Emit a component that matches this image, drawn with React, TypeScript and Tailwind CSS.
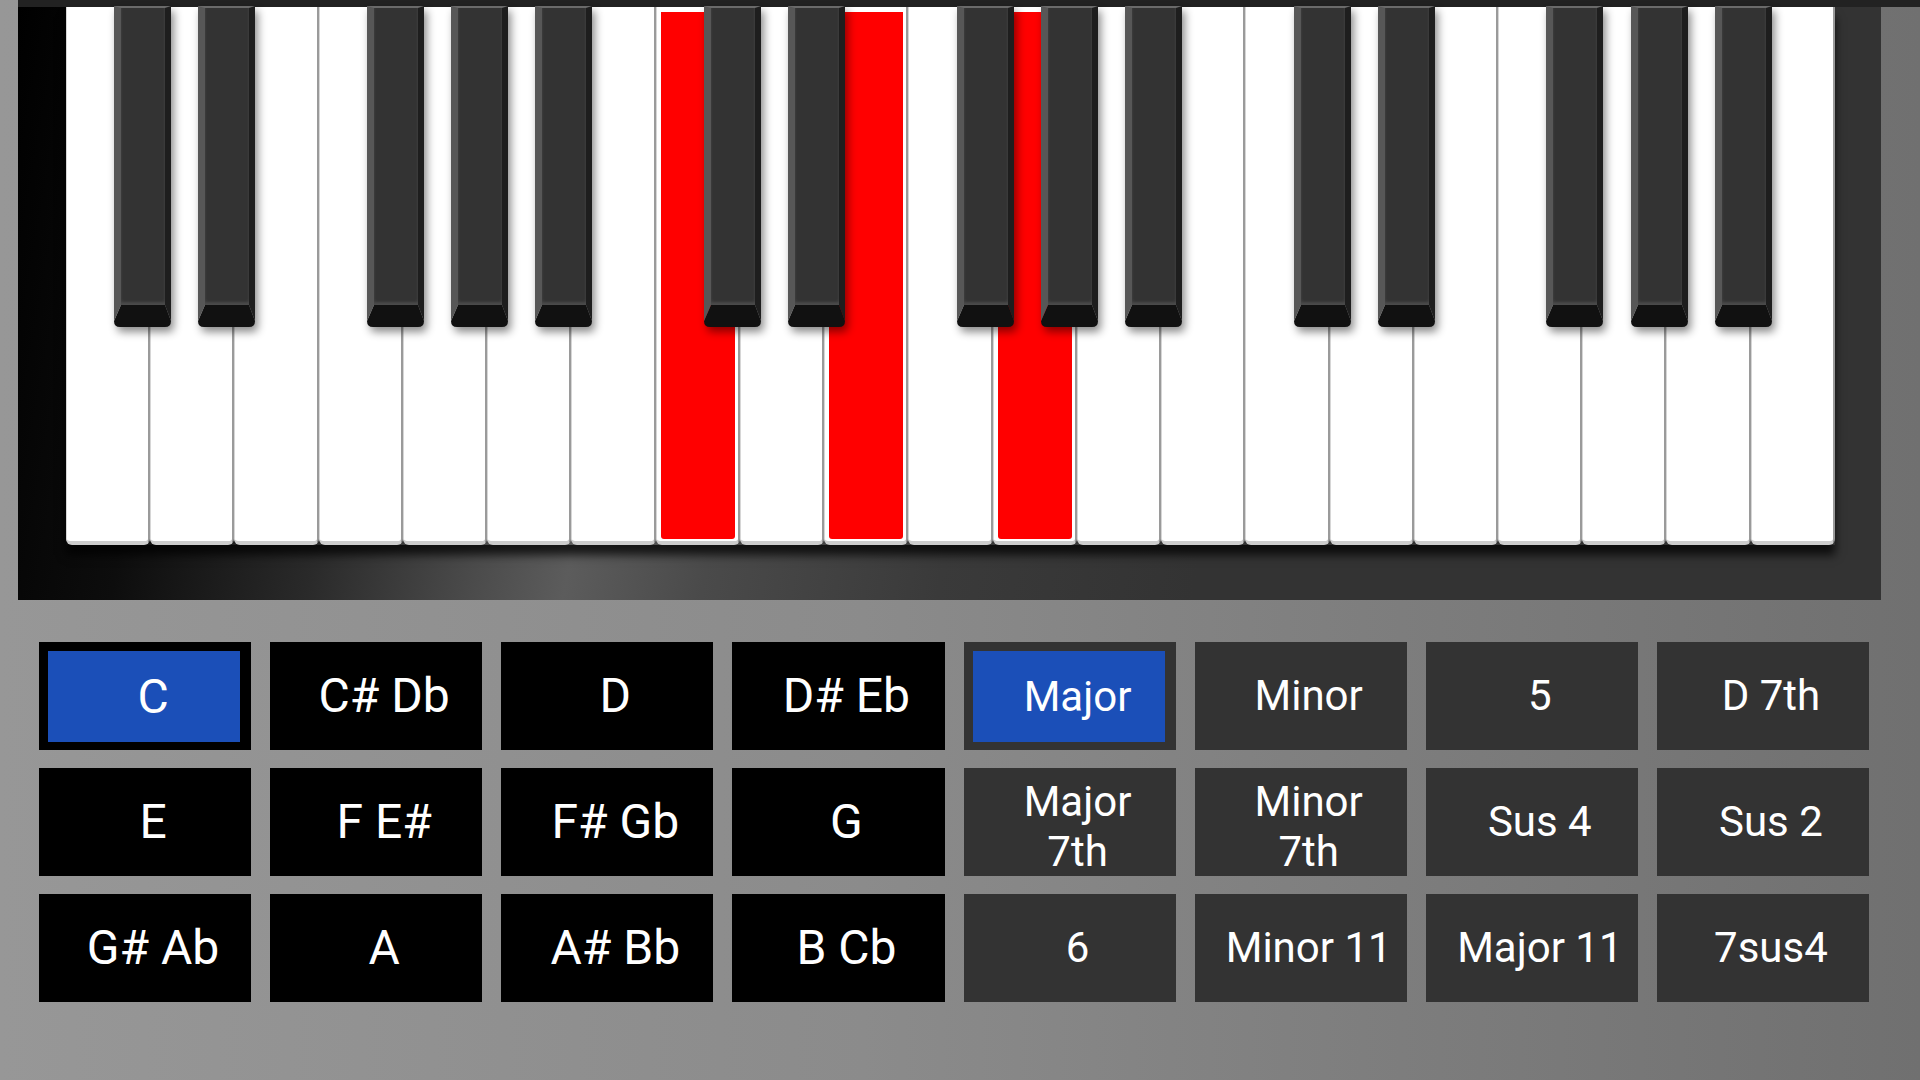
import React from 'react';

// one keyboard of 3 octaves: 21 white keys, black keys sit on the boundaries
const WHITE_COUNT = 21;
const KEYS_WIDTH = 1769;
const WHITE_W = KEYS_WIDTH / WHITE_COUNT;
const blackBoundaries = [0, 1, 2].flatMap((o) => [1, 2, 4, 5, 6].map((b) => o * 7 + b));
const pressed = [7, 9, 11]; // C E G

const noteRows = [
  ['C', 'C# Db', 'D', 'D# Eb'],
  ['E', 'F E#', 'F# Gb', 'G'],
  ['G# Ab', 'A', 'A# Bb', 'B Cb'],
];
const chordRows = [
  ['Major', 'Minor', '5', 'D 7th'],
  ['Major\n7th', 'Minor\n7th', 'Sus 4', 'Sus 2'],
  ['6', 'Minor 11', 'Major 11', '7sus4'],
];

function WhiteKey({ down }: { down: boolean }) {
  return (
    <div className="flex-1 h-full flex bg-white border-l border-l-[#d6d6d6] border-r-2 border-r-[#9a9a9a] border-b-4 border-b-[#cdcdcd] rounded-b-[6px] pt-[5px] pl-[4px] pr-[3px] pb-[2px]">
      {down && <div className="flex-1 bg-[#ff0000] rounded-b-[3px]" />}
    </div>
  );
}

function BlackKey({ left }: { left: number }) {
  return (
    <div
      className="absolute top-[-1px] w-[57px] h-[321px] flex flex-col drop-shadow-[3px_5px_4px_rgba(0,0,0,0.45)]"
      style={{ left }}
    >
      <div className="flex-1 bg-[#333333] border-t-2 border-t-[#6a6a6a] border-l-[7px] border-l-[#575757] border-r-[6px] border-r-[#1e1e1e] shadow-[inset_0_-3px_3px_rgba(120,120,120,0.35)]" />
      <svg width="57" height="22" viewBox="0 0 57 22" className="block">
        <path d="M7 0 H51 L57 16 Q57 22 51 22 H6 Q0 22 0 16 Z" fill="#111111" />
        <path d="M0 0 H7 L0 16 Z" fill="#575757" />
        <path d="M51 0 H57 V16 Z" fill="#1e1e1e" />
      </svg>
    </div>
  );
}

function Pad({ label, dark, selected, big }: { label: string; dark: boolean; selected?: boolean; big?: boolean }) {
  const lines = label.split('\n');
  const text = (
    <span className={`text-white text-center leading-[1.19] ${big ? 'text-[48px]' : 'text-[42px]'} ${lines.length > 1 ? 'pt-[9px]' : ''}`}>
      {lines.map((l, i) => (
        <React.Fragment key={i}>
          {i > 0 && <br />}
          {l}
        </React.Fragment>
      ))}
    </span>
  );
  return (
    <div className={`h-[108px] flex ${dark ? 'bg-black' : 'bg-[#333333]'} ${selected ? 'pt-[9px] pb-[8px] pl-[9px] pr-[11px]' : ''}`}>
      <div className={`flex-1 flex items-center justify-center ${selected ? 'bg-[#1b4fb8] pl-[18px]' : 'pl-[16px]'}`}>
        {text}
      </div>
    </div>
  );
}

export default function App() {
  return (
    <div className="w-[1920px] h-[1080px] overflow-hidden flex flex-col bg-[linear-gradient(90deg,#979797_0%,#8b8b8b_45%,#7c7c7c_75%,#707070_100%)] font-['Roboto','Liberation_Sans',sans-serif]">
      <div className="ml-[18px] h-[7px] bg-[#222222]" />
      <div className="ml-[18px] w-[1863px] h-[593px] pl-[48px] bg-[linear-gradient(100deg,#000000_0%,#0d0d0d_10%,#2a2a2a_20%,#4a4a4a_28%,#5c5c5c_33%,#4a4a4a_40%,#3a3a3a_52%,#333333_65%,#333333_100%)]">
        <div className="relative w-[1769px] h-[538px] flex shadow-[0_10px_9px_rgba(0,0,0,0.75)]">
          {Array.from({ length: WHITE_COUNT }, (_, i) => (
            <WhiteKey key={i} down={pressed.includes(i)} />
          ))}
          {blackBoundaries.map((b) => (
            <BlackKey key={b} left={b * WHITE_W - 36} />
          ))}
        </div>
      </div>
      <div className="ml-[39px] mt-[42px] w-[1830px] grid grid-cols-8 gap-x-[19px] gap-y-[18px]">
        {noteRows.map((row, r) => (
          <React.Fragment key={r}>
            {row.map((n, c) => (
              <Pad key={n} label={n} dark big selected={r === 0 && c === 0} />
            ))}
            {chordRows[r].map((ch, c) => (
              <Pad key={ch} label={ch} dark={false} selected={r === 0 && c === 0} />
            ))}
          </React.Fragment>
        ))}
      </div>
    </div>
  );
}
